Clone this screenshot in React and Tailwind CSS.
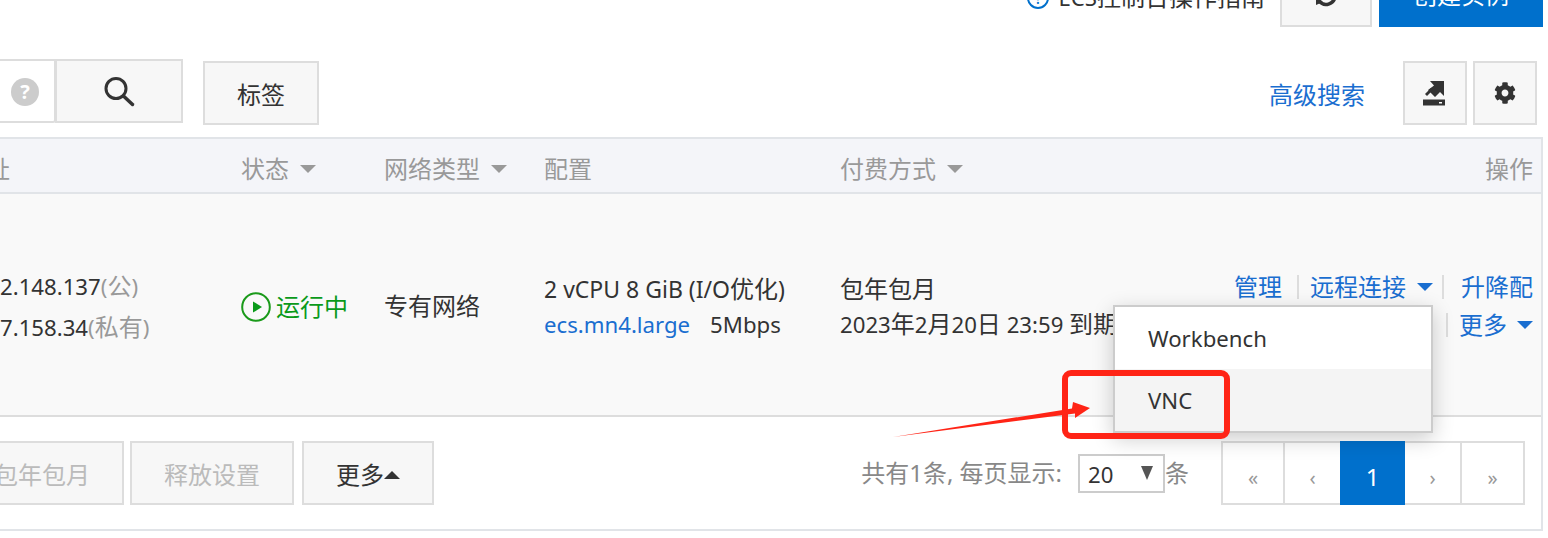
import { FaCog } from 'react-icons/fa';

// Table columns are shared by the header and the row.
const COLS = 'grid grid-cols-[241px_143px_160px_296px_380px_1fr]';

function Caret({ className, up = false }) {
  return (
    <svg viewBox="0 0 16 8" className={className} fill="currentColor">
      <polygon points={up ? '8,0 16,8 0,8' : '0,0 16,0 8,8'} />
    </svg>
  );
}

// Chinese characters stay at full size inside the narrower latin lines.
function C({ children }) {
  return <span className="text-[24px]">{children}</span>;
}

function Sep({ className = '' }) {
  return <span className={`h-[24px] w-[2px] bg-[#dddddd] ${className}`} />;
}

function IconBox({ children }) {
  return (
    <button className="flex h-[64px] w-[64px] items-center justify-center border-2 border-[#dddddd] bg-[#f7f7f7] text-[#333333]">
      {children}
    </button>
  );
}

function FootButton({ children, disabled, className = '' }) {
  return (
    <button className={`flex h-[64px] items-center justify-center border-2 border-[#dddddd] bg-[#f7f7f7] pt-[3px] ${disabled ? 'text-[#bbbbbb]' : 'text-[#333333]'} ${className}`}>
      {children}
    </button>
  );
}

function PageLink({ children, className }) {
  return (
    <span className={`flex h-full items-center justify-center pt-[10px] text-[20px] text-[#999999] ${className}`}>
      {children}
    </span>
  );
}

export default function App() {
  return (
    <div className="relative h-[538px] w-[1548px] overflow-hidden bg-white font-['Noto_Sans','Noto_Sans_CJK_SC',sans-serif] text-[24px] leading-[32px] text-[#333333]">
      <div className="w-[1543px]">
        {/* Top bar, cut off by the top of the picture */}
        <div className="flex h-[27px] items-end justify-end overflow-hidden">
          <div className="mb-[17px] mr-[15px] flex shrink-0 items-center gap-[9px] leading-[24px]">
            <span className="flex h-[22px] w-[22px] items-center justify-center rounded-full border-2 border-[#0070cc] text-[16px] text-[#0070cc]">?</span>
            <span><span className="text-[22.2px]">ECS</span>控制台操作指南</span>
          </div>
          <button className="mr-[7px] flex h-[64px] w-[92px] shrink-0 items-center justify-center border-2 border-[#dddddd] bg-[#f7f7f7]">
            <svg viewBox="0 0 24 24" className="h-[24px] w-[24px]" fill="none" stroke="#333333" strokeWidth="3.5">
              <path d="M21 12a9 9 0 0 1-16 6" />
              <polygon points="2,13 9,19 2,22" fill="#333333" stroke="none" />
            </svg>
          </button>
          <button className="h-[64px] w-[164px] shrink-0 bg-[#0070cc] text-white">创建实例</button>
        </div>

        {/* Search row */}
        <div className="mt-[32px] flex items-start">
          <div className="flex h-[64px] w-[56px] items-center rounded-br-[3px] border-y-2 border-r-2 border-[#dddddd] bg-white pl-[11px] pt-[1px]">
            <span className="flex h-[28px] w-[28px] items-center justify-center rounded-full bg-[#cccccc] text-[20px] font-bold text-white">?</span>
          </div>
          <button className="-ml-[1px] flex h-[64px] w-[128px] items-center justify-center border-2 border-[#dddddd] bg-[#f7f7f7] pt-[1px]">
            <svg viewBox="0 0 32 32" className="h-[32px] w-[32px]" fill="none" stroke="#333333" strokeWidth="3" strokeLinecap="round">
              <circle cx="13" cy="12.5" r="10" />
              <path d="M20.5 20l9 8.5" strokeWidth="3.5" />
            </svg>
          </button>
          <button className="ml-[20px] mt-[2px] flex h-[64px] w-[116px] items-center justify-center border-2 border-[#dddddd] bg-[#f7f7f7] pt-[3px]">标签</button>
          <div className="ml-auto mt-[2px] flex items-start">
            <a className="mr-[38px] mt-[18px] text-[#1a6ed0]">高级搜索</a>
            <IconBox>
              <svg viewBox="0 0 24 26" className="-ml-[2px] h-[26px] w-[24px]" fill="#333333">
                <polygon points="8,1 22,1 22,16 18,12 13,17 6,10 12,5.5" />
                <polygon points="3,14 9,8 11,10 5,16" fill="#333333" />
                <path d="M1 19.5h22v6H1z" />
                <path d="M17 22h3v1.5h-3z" fill="#ffffff" />
              </svg>
            </IconBox>
            <div className="ml-[6px] mr-[6px]">
              <IconBox>
                <FaCog size={22} />
              </IconBox>
            </div>
          </div>
        </div>

        {/* Instance table */}
        <div className="mt-[12px] border-y-2 border-r-2 border-[#e1e4e8]">
          <div className={`${COLS} h-[55px] items-center border-b-2 border-[#e1e4e8] bg-[#f4f5f9] pt-[6px] text-[#999999]`}>
            <span className="-ml-[14px]">址</span>
            <span className="flex items-center gap-[11px]">状态<Caret className="h-[8px] w-[16px]" /></span>
            <span className="flex items-center gap-[11px]">网络类型<Caret className="h-[8px] w-[16px]" /></span>
            <span>配置</span>
            <span className="flex items-center gap-[11px]">付费方式<Caret className="h-[8px] w-[16px]" /></span>
            <span className="pr-[8px] text-right">操作</span>
          </div>

          <div className={`${COLS} h-[223px] border-b-2 border-[#dddddd] bg-[#f9f9f9]`}>
            <div className="whitespace-nowrap pt-[72px] text-[22.2px] leading-[40px]">
              <div>2.148.137<span className="text-[#999999]">(<C>公</C>)</span></div>
              <div>7.158.34<span className="text-[#999999]">(<C>私有</C>)</span></div>
            </div>
            <div className="flex items-center gap-[5px] self-start pt-[97px] text-[#0a9a1a]">
              <svg viewBox="0 0 30 30" className="h-[30px] w-[30px]">
                <circle cx="15" cy="15" r="13.8" fill="none" stroke="#1a9a1a" strokeWidth="2" />
                <polygon points="12,9.5 21,15 12,20.5" fill="#0a9a1a" />
              </svg>
              <span>运行中</span>
            </div>
            <div className="pt-[96px]">专有网络</div>
            <div className="whitespace-nowrap pt-[77px] leading-[35px]">
              <div className="text-[23px]">2 vCPU 8 GiB (I/O<C>优化</C>)</div>
              <div className="text-[22.2px]">
                <a className="text-[#1a6ed0]">ecs.mn4.large</a>
                <span className="ml-[20px]">5Mbps</span>
              </div>
            </div>
            <div className="whitespace-nowrap pt-[77px] leading-[35px]">
              <div>包年包月</div>
              <div className="text-[22.2px]">2023<C>年</C>2<C>月</C>20<C>日</C> 23:59 <C>到期</C></div>
            </div>
            <div className="pr-[8px] pt-[77px] text-[#1a6ed0]">
              <div className="flex h-[32px] items-center justify-end">
                管理
                <Sep className="ml-[15px] mr-[11px]" />
                远程连接
                <Caret className="ml-[11px] h-[8px] w-[16px]" />
                <Sep className="ml-[9px] mr-[17px]" />
                升降配
              </div>
              <div className="mt-[6px] flex h-[32px] items-center justify-end">
                <Sep className="mr-[11px]" />
                更多
                <Caret className="ml-[10px] h-[8px] w-[16px]" />
              </div>
            </div>
          </div>

          {/* Footer with batch actions and paging */}
          <div className="flex h-[112px] items-start bg-white pt-[24px]">
            <FootButton disabled className="-ml-[40px] w-[164px]">包年包月</FootButton>
            <FootButton disabled className="ml-[6px] w-[164px]">释放设置</FootButton>
            <FootButton className="ml-[8px] w-[132px]">
              更多<Caret up className="h-[8px] w-[16px]" />
            </FootButton>
            <div className="ml-auto flex h-[64px] items-center pr-[16px]">
              <span className="mr-[16px] text-[#888888]">共有1条, 每页显示:</span>
              <div className="flex h-[39px] w-[87px] items-center justify-between border-2 border-[#cccccc] pl-[8px] pr-[10px]">
                <span className="pt-[3px] text-[22.2px]">20</span>
                <svg viewBox="0 0 12 14" className="h-[14px] w-[12px]" fill="#555555"><polygon points="0,0 12,0 6,14" /></svg>
              </div>
              <span className="mr-[32px] text-[#888888]">条</span>
              <div className="flex h-[64px] w-[304px] border-2 border-[#dddddd]">
                <PageLink className="w-[62px] border-r-2 border-[#dddddd]">«</PageLink>
                <PageLink className="w-[55px]">‹</PageLink>
                <span className="-my-[2px] flex h-[64px] w-[65px] items-center justify-center bg-[#0070cc] pt-[8px] text-white">1</span>
                <PageLink className="w-[57px] border-r-2 border-[#dddddd]">›</PageLink>
                <PageLink className="flex-1">»</PageLink>
              </div>
            </div>
          </div>
        </div>
      </div>

      {/* Open dropdown over the row */}
      <div className="absolute left-[1113px] top-[305px] w-[320px] border-2 border-[#cccccc] bg-white text-[22.2px] shadow-[0_6px_20px_rgba(0,0,0,0.2)]">
        <div className="flex h-[62px] items-center pl-[33px] pt-[2px]">Workbench</div>
        <div className="flex h-[62px] items-center bg-[#f4f4f4] pl-[33px] pt-[2px]">VNC</div>
      </div>

      {/* Red annotation drawn over the screenshot */}
      <div className="absolute left-[1062px] top-[370px] h-[69px] w-[168px] rounded-[9px] border-[6px] border-[#ff2416]" />
      <svg className="absolute left-[890px] top-[398px] h-[42px] w-[204px]" viewBox="890 398 204 42">
        <polygon points="893,437 1072,408.5 1073,402 1090,408 1075,418 1075,413.5" fill="#ff2416" />
      </svg>
    </div>
  );
}
